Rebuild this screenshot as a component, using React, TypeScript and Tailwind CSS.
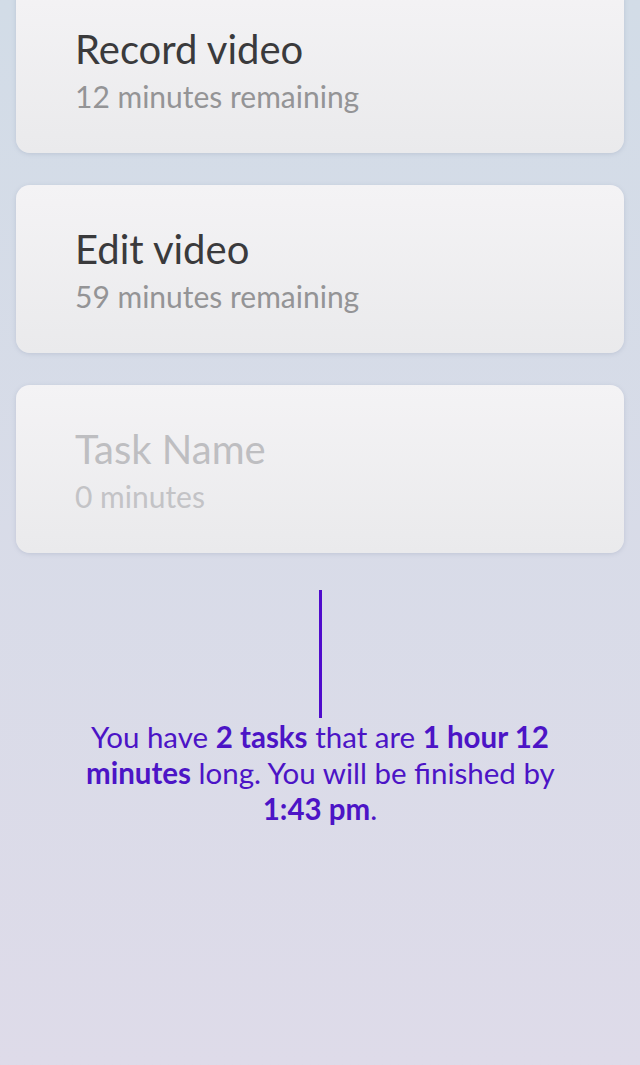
import React from "react";

function Card({ title, sub, placeholder }: { title: string; sub: string; placeholder?: boolean }) {
  return (
    <div className="h-[168px] rounded-[14px] bg-gradient-to-b from-[#f4f3f5] to-[#eaeaec] shadow-[0_1px_4px_rgba(120,130,160,0.25)] pl-[59px] pt-[39px]">
      <div
        className={`text-[40px] leading-[50px] ${placeholder ? "text-[#bebec1]" : "text-[#3a3a3c]"}`}
      >
        {title}
      </div>
      <div className={`text-[30px] leading-[40px] mt-[2px] ${placeholder ? "text-[#c3c3c6]" : "text-[#949496]"}`}>
        {sub}
      </div>
    </div>
  );
}

export default function App() {
  return (
    <div
      className="min-h-[1065px] w-[640px] overflow-hidden bg-gradient-to-b from-[#d2dce7] to-[#dedbe9]"
      style={{ fontFamily: "Lato, 'Noto Sans', sans-serif" }}
    >
      <div className="flex flex-col gap-[32px] px-[16px] mt-[-15px]">
        <Card title="Record video" sub="12 minutes remaining" />
        <Card title="Edit video" sub="59 minutes remaining" />
        <Card title="Task Name" sub="0 minutes" placeholder />
      </div>
      <div className="flex flex-col items-center mt-[37px]">
        <div className="w-[3px] h-[128px] bg-[#4f0bcc]" />
        <p className="w-[490px] text-center text-[29.5px] leading-[36px] text-[#4c14c6] mt-[1px]">
          You have <b className="font-bold">2 tasks</b> that are <b className="font-bold">1 hour 12 minutes</b> long. You will be finished by{" "}
          <b className="font-bold">1:43 pm</b>.
        </p>
      </div>
    </div>
  );
}
